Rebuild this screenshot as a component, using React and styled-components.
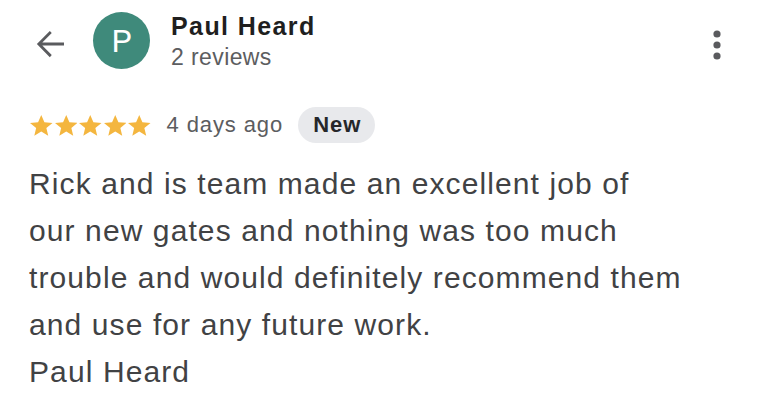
import React from "react";
import styled, { createGlobalStyle } from "styled-components";

const Global = createGlobalStyle`
  html, body { margin: 0; padding: 0; background: #ffffff; }
  body { font-family: "Liberation Sans", Arial, sans-serif; }
`;

const Page = styled.div`
  width: 768px;
  height: 405px;
  background: #ffffff;
  overflow: hidden;
`;

const Header = styled.header`
  display: flex;
  align-items: flex-start;
  padding: 12px 39px 0 29px;
  height: 95px;
  box-sizing: border-box;
`;

const IconButton = styled.button`
  border: 0;
  background: none;
  padding: 0;
  margin-top: ${(p) => p.$top || 0}px;
  display: flex;
  color: #5a5b5e;
  cursor: pointer;
`;

const Avatar = styled.div`
  width: 57px;
  height: 57px;
  border-radius: 50%;
  background: #3f8a7b;
  color: #ffffff;
  display: flex;
  align-items: center;
  justify-content: center;
  font-family: Roboto, "Liberation Sans", sans-serif;
  font-size: 32px;
  margin-left: 22px;
  flex-shrink: 0;
`;

const Who = styled.div`
  display: flex;
  flex-direction: column;
  margin-left: 21px;
`;

const Name = styled.div`
  font-size: 25px;
  line-height: 28px;
  font-weight: 700;
  letter-spacing: 1.4px;
  color: #1f1f1f;
`;

const Sub = styled.div`
  margin-top: 4px;
  font-size: 23px;
  line-height: 26px;
  letter-spacing: 0.4px;
  color: #5c5d60;
`;

const Spacer = styled.div`
  flex: 1;
`;

const Content = styled.main`
  padding: 12px 0 0 29px;
`;

const RatingRow = styled.div`
  display: flex;
  align-items: center;
  height: 36px;
`;

const Stars = styled.div`
  display: flex;
  gap: 2px;
  margin-left: 1px;
  color: #f4b63f;
`;

const When = styled.span`
  margin-left: 16px;
  font-size: 22px;
  letter-spacing: 0.9px;
  color: #5c5d60;
`;

const Badge = styled.span`
  margin-left: 15px;
  height: 36px;
  padding: 0 14px 0 15px;
  border-radius: 18px;
  background: #e8e9ec;
  display: inline-flex;
  align-items: center;
  font-size: 22px;
  font-weight: 700;
  letter-spacing: 1px;
  color: #26272a;
`;

const Body = styled.p`
  margin: 17px 0 0 0;
  font-size: 30px;
  line-height: 47px;
  letter-spacing: 1.1px;
  color: #414244;
`;

const BackIcon = () => (
  <svg width="42" height="42" viewBox="0 0 24 24" fill="currentColor">
    <path d="M20 11.1H7.6l5.4-5.4L11.9 4.5 4.5 12l7.4 7.5 1.1-1.2-5.4-5.4H20v-1.8z" />
  </svg>
);

const MoreIcon = () => (
  <svg width="24" height="42" viewBox="0 0 24 42" fill="currentColor">
    <circle cx="12" cy="11" r="3.6" />
    <circle cx="12" cy="22" r="3.6" />
    <circle cx="12" cy="33" r="3.6" />
  </svg>
);

const Star = () => (
  <svg width="22.5" height="21" viewBox="2 2 20 19.3" preserveAspectRatio="none" fill="currentColor">
    <path d="M12 17.27L18.18 21l-1.64-7.03L22 9.24l-7.19-.61L12 2 9.19 8.63 2 9.24l5.46 4.73L5.82 21z" />
  </svg>
);

export default function App() {
  return (
    <Page>
      <Global />
      <Header>
        <IconButton $top={11} aria-label="Back">
          <BackIcon />
        </IconButton>
        <Avatar>P</Avatar>
        <Who>
          <Name>Paul Heard</Name>
          <Sub>2 reviews</Sub>
        </Who>
        <Spacer />
        <IconButton $top={11} aria-label="More">
          <MoreIcon />
        </IconButton>
      </Header>
      <Content>
        <RatingRow>
          <Stars>
            {[0, 1, 2, 3, 4].map((i) => (
              <Star key={i} />
            ))}
          </Stars>
          <When>4 days ago</When>
          <Badge>New</Badge>
        </RatingRow>
        <Body>
          Rick and is team made an excellent job of
          <br />
          our new gates and nothing was too much
          <br />
          trouble and would definitely recommend them
          <br />
          and use for any future work.
          <br />
          Paul Heard
        </Body>
      </Content>
    </Page>
  );
}
